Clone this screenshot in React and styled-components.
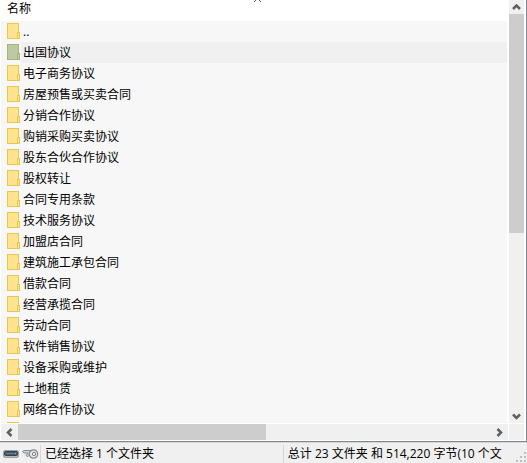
import React, { useState } from 'react'
import styled, { createGlobalStyle } from 'styled-components'

const GlobalStyle = createGlobalStyle`
  * {
    box-sizing: border-box;
  }

  body {
    margin: 0;
    background: #f0f0f0;
    color: #000;
    font: 12px/20px 'Open Sans', 'Noto Sans CJK SC', sans-serif;
  }

  button {
    padding: 0;
    border: 0;
    background: transparent;
    color: inherit;
    font: inherit;
  }
`

const Window = styled.div`
  display: flex;
  flex-direction: column;
  height: 100vh;
  overflow: hidden;
`

const Panel = styled.main`
  flex: 1;
  min-height: 0;
  display: grid;
  grid-template-columns: minmax(0, 1fr) 15px;
  grid-template-rows: minmax(0, 1fr) 16px;
  column-gap: 1px;
  row-gap: 1px;
  padding: 0 2px 1px 1px;
  background: #fff;
  border-right: 1px solid #828790;
  border-bottom: 1px solid #828790;
`

const ListArea = styled.div`
  overflow: hidden;
  padding-right: 1px;
`

const FileTable = styled.table`
  width: 100%;
  border-collapse: collapse;
`

const HeadCell = styled.th`
  height: 21px;
  padding: 0 0 0 6px;
  background: #fff;
  font-weight: normal;
  text-align: left;
`

const SortButton = styled.button`
  display: grid;
  grid-template-columns: 1fr auto 1fr;
  align-items: start;
  width: 100%;
  height: 21px;
  line-height: 18px;
  text-align: left;

  svg {
    display: block;
  }
`

const Row = styled.tr`
  height: 21px;
  background: #f7f7f7;
`

const Cell = styled.td`
  height: 21px;
  padding: 0 0 0 6px;
`

const Entry = styled.div`
  display: flex;
  align-items: center;
  height: 21px;

  svg {
    flex: none;
    display: block;
  }
`

const Name = styled.span`
  flex: 1;
  padding-left: 2px;
  line-height: 21px;
  white-space: nowrap;
  background: ${props => (props.$selected ? '#f0f0f0' : 'transparent')};
`

const ScrollBar = styled.div`
  display: flex;
  flex-direction: ${props => (props.$vertical ? 'column' : 'row')};
  background: #f0f0f0;
`

const ScrollButton = styled.button`
  flex: none;
  display: flex;
  align-items: center;
  justify-content: center;
  width: ${props => (props.$vertical ? 'auto' : '17px')};
  height: ${props => (props.$vertical ? '14px' : 'auto')};
`

const Track = styled.div`
  flex: 1;
  display: flex;
  flex-direction: ${props => (props.$vertical ? 'column' : 'row')};
`

const Thumb = styled.div`
  flex: 0 0 ${props => props.$size};
  background: #cdcdcd;
`

const Corner = styled.div`
  background: #f0f0f0;
`

const StatusBar = styled.footer`
  flex: none;
  display: flex;
  height: 21px;
  padding: 2px 0 0 1px;
  border-top: 1px solid #d7d7d7;
  background: #f0f0f0;
`

const StatusIcons = styled.div`
  flex: none;
  display: flex;
  align-items: center;
  gap: 3px;
  width: 39px;
  padding-left: 2px;

  svg {
    flex: none;
  }
`

const StatusText = styled.div`
  flex: ${props => props.$grow} 1 0;
  min-width: 0;
  padding-left: 4px;
  border-left: 1px solid #d7d7d7;
  line-height: 18px;
  white-space: nowrap;
  overflow: hidden;
`

const Grip = styled.div`
  flex: none;
  display: flex;
  align-items: flex-end;
  justify-content: flex-end;
  width: 17px;
`

const folders = [
  '..',
  '出国协议',
  '电子商务协议',
  '房屋预售或买卖合同',
  '分销合作协议',
  '购销采购买卖协议',
  '股东合伙合作协议',
  '股权转让',
  '合同专用条款',
  '技术服务协议',
  '加盟店合同',
  '建筑施工承包合同',
  '借款合同',
  '经营承揽合同',
  '劳动合同',
  '软件销售协议',
  '设备采购或维护',
  '土地租赁',
  '网络合作协议',
  ''
]

function FolderIcon({ selected }) {
  const fill = selected ? '#bccaa4' : '#ffe48f'
  const edge = selected ? '#a9b47a' : '#eac84f'
  return (
    <svg width="14" height="17" viewBox="0 0 14 17" shapeRendering="crispEdges" aria-hidden="true">
      <rect x="0.5" y="0.5" width="11" height="15" fill={fill} stroke={edge} />
      <path d="M10.5 9.5h2v6h-2z" fill={fill} stroke={edge} />
    </svg>
  )
}

const arrows = {
  up: 'M1 6L4.5 2.5L8 6',
  down: 'M1 2.5L4.5 6L8 2.5',
  left: 'M6.5 1L3 4.5L6.5 8',
  right: 'M2.5 1L6 4.5L2.5 8'
}

function Arrow({ direction }) {
  return (
    <svg width="9" height="9" viewBox="0 0 9 9" aria-hidden="true">
      <path d={arrows[direction]} fill="none" stroke="#606060" strokeWidth="2.5" />
    </svg>
  )
}

function DriveIcon() {
  return (
    <svg width="16" height="12" viewBox="0 0 16 12" aria-hidden="true">
      <rect x="0.5" y="2.5" width="15" height="7" rx="1.5" fill="#b4bcc2" stroke="#98a2aa" />
      <rect x="1.5" y="3.5" width="13" height="4" rx="1" fill="#4a5964" stroke="#34424d" />
      <path d="M3 5.5h8" stroke="#6d7e8a" />
      <path d="M12 5.5h1" stroke="#9fd4e8" />
    </svg>
  )
}

function KeyIcon() {
  return (
    <svg width="17" height="12" viewBox="0 0 17 12" aria-hidden="true">
      <path d="M9 2.5H2L0.5 3.5L2 5h4L4 7.5L5.5 8.5L8 7" fill="#d0d3d5" stroke="#858a8f" />
      <circle cx="11.5" cy="6" r="4.2" fill="#e4e6e8" stroke="#858a8f" strokeWidth="1.2" />
      <circle cx="12" cy="6" r="1.6" fill="#fff" stroke="#747a80" />
    </svg>
  )
}

function FileRow({ name, selected, onSelect }) {
  return (
    <Row onClick={onSelect} aria-selected={selected}>
      <Cell>
        <Entry>
          <FolderIcon selected={selected} />
          <Name $selected={selected}>{name}</Name>
        </Entry>
      </Cell>
    </Row>
  )
}

export default function App() {
  const [selected, setSelected] = useState('出国协议')

  return (
    <Window>
      <GlobalStyle />
      <Panel>
        <ListArea>
          <FileTable>
            <thead>
              <tr>
                <HeadCell aria-sort="ascending">
                  <SortButton type="button">
                    <span>名称</span>
                    <svg width="9" height="3" viewBox="0 0 9 3" aria-hidden="true">
                      <path d="M3 0L1 2M6 0L8 2" fill="none" stroke="#606060" />
                    </svg>
                  </SortButton>
                </HeadCell>
              </tr>
            </thead>
            <tbody>
              {folders.map(name => (
                <FileRow key={name} name={name} selected={name === selected} onSelect={() => setSelected(name)} />
              ))}
            </tbody>
          </FileTable>
        </ListArea>
        <ScrollBar $vertical>
          <ScrollButton $vertical type="button" aria-label="向上滚动">
            <Arrow direction="up" />
          </ScrollButton>
          <Track $vertical>
            <Thumb $size="55.5%" />
          </Track>
          <ScrollButton $vertical type="button" aria-label="向下滚动">
            <Arrow direction="down" />
          </ScrollButton>
        </ScrollBar>
        <ScrollBar>
          <ScrollButton type="button" aria-label="向左滚动">
            <Arrow direction="left" />
          </ScrollButton>
          <Track>
            <Thumb $size="52.5%" />
          </Track>
          <ScrollButton type="button" aria-label="向右滚动">
            <Arrow direction="right" />
          </ScrollButton>
        </ScrollBar>
        <Corner />
      </Panel>
      <StatusBar>
        <StatusIcons>
          <DriveIcon />
          <KeyIcon />
        </StatusIcons>
        <StatusText $grow={243}>已经选择 1 个文件夹</StatusText>
        <StatusText $grow={227}>总计 23 文件夹 和 514,220 字节(10 个文</StatusText>
        <Grip>
          <svg width="11" height="11" viewBox="0 0 11 11" shapeRendering="crispEdges" aria-hidden="true">
            <path d="M8 0h2v2h-2zM4 4h2v2h-2zM8 4h2v2h-2zM0 8h2v2h-2zM4 8h2v2h-2zM8 8h2v2h-2z" fill="#bfbfbf" />
          </svg>
        </Grip>
      </StatusBar>
    </Window>
  )
}
